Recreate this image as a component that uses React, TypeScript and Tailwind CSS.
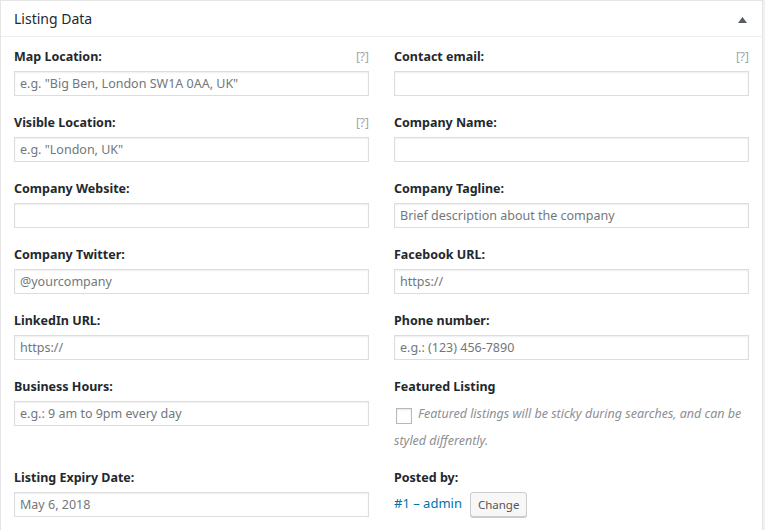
import React from 'react';

const font = { fontFamily: '"Noto Sans", "Open Sans", sans-serif' };

const Help: React.FC = () => <span className="text-[12px] text-[#a0a5aa] font-normal">[?]</span>;

const Label: React.FC<{ text: string; help?: boolean }> = ({ text, help }) => (
  <div className="flex items-center justify-between h-[20px] mb-[4px]">
    <span className="text-[12.5px] font-bold text-[#23282d]">{text}</span>
    {help && <Help />}
  </div>
);

const Field: React.FC<{ label: string; placeholder?: string; value?: string; help?: boolean }> = ({ label, placeholder, value, help }) => (
  <div className="flex flex-col">
    <Label text={label} help={help} />
    <input
      type="text"
      placeholder={placeholder}
      defaultValue={value}
      className="w-full h-[25px] border border-[#dddddd] bg-white px-[5px] text-[12.5px] text-[#555] placeholder:text-[#72777c] outline-none shadow-[inset_0_1px_2px_rgba(0,0,0,0.07)]"
    />
  </div>
);

export default function App() {
  return (
    <div className="w-[765px] h-[530px] bg-[#f1f1f1] overflow-hidden" style={font}>
      <div className="w-[763px] h-[531px] bg-white border border-[#e5e5e5]">
        <div className="h-[36px] border-b border-[#eeeeee] flex items-center justify-between pl-[13px] pr-[15px]">
          <span className="text-[14px] text-[#23282d]">Listing Data</span>
          <svg width="9" height="6" viewBox="0 0 9 6" className="mt-[2px]">
            <path d="M0 6 L4.5 0 L9 6 Z" fill="#555d66" />
          </svg>
        </div>
        <div className="grid grid-cols-2 gap-x-[25px] gap-y-[17px] px-[13px] pt-[10px]">
          <Field label="Map Location:" placeholder='e.g. "Big Ben, London SW1A 0AA, UK"' help />
          <Field label="Contact email:" help />
          <Field label="Visible Location:" placeholder='e.g. "London, UK"' help />
          <Field label="Company Name:" />
          <Field label="Company Website:" />
          <Field label="Company Tagline:" placeholder="Brief description about the company" />
          <Field label="Company Twitter:" placeholder="@yourcompany" />
          <Field label="Facebook URL:" placeholder="https://" />
          <Field label="LinkedIn URL:" placeholder="https://" />
          <Field label="Phone number:" placeholder="e.g.: (123) 456-7890" />
          <Field label="Business Hours:" placeholder="e.g.: 9 am to 9pm every day" />
          <div className="flex flex-col">
            <Label text="Featured Listing" />
            <p className="text-[12.5px] italic text-[#8c8f94] leading-[27px] -mt-[1px] -mb-[3px] pr-[4px]">
              <span className="inline-block w-[16px] h-[16px] border border-[#b4b9be] bg-white align-middle mr-[6px] ml-[2px] relative top-[1px] shadow-[inset_0_1px_2px_rgba(0,0,0,0.1)]" />
              Featured listings will be sticky during searches, and can be styled differently.
            </p>
          </div>
          <Field label="Listing Expiry Date:" placeholder="May 6, 2018" />
          <div className="flex flex-col">
            <Label text="Posted by:" />
            <div className="flex items-center gap-[8px] h-[25px]">
              <span className="text-[13px] text-[#0073aa] relative -top-[1px]">#1 – admin</span>
              <button className="h-[25px] px-[7px] text-[11.5px] text-[#555] bg-[#f7f7f7] border border-[#cccccc] rounded-[3px] shadow-[0_1px_0_#cccccc]">
                Change
              </button>
            </div>
          </div>
        </div>
      </div>
    </div>
  );
}
